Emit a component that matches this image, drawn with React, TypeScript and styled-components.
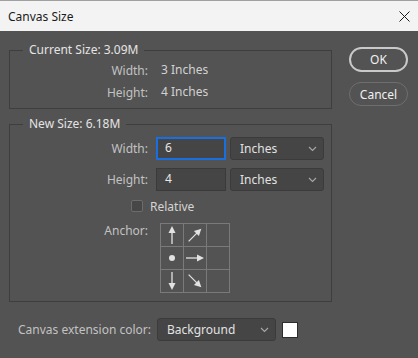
import styled, { createGlobalStyle } from 'styled-components';

const GlobalStyle = createGlobalStyle`
  html, body {
    margin: 0;
    padding: 0;
    background: #535353;
  }
  body {
    font-family: 'Segoe UI', 'Noto Sans', sans-serif;
    font-size: 12px;
  }
`;

const Window = styled.div`
  width: 418px;
  height: 358px;
  background: #535353;
  display: flex;
  flex-direction: column;
  overflow: hidden;
`;

const TitleBar = styled.div`
  height: 31px;
  box-sizing: border-box;
  background: #f3f3f3;
  border-top: 1px solid #a0a0a0;
  display: flex;
  align-items: center;
  justify-content: space-between;
  padding: 0 8px 0 8px;
  color: #1b1b1b;
  font-size: 12px;
`;

const Body = styled.div`
  display: flex;
  padding: 11px 10px 0 9px;
`;

const LeftColumn = styled.div`
  width: 323px;
  display: flex;
  flex-direction: column;
`;

const Group = styled.fieldset<{ $gap?: number; $bottom: number }>`
  margin: 0 0 ${(p) => p.$gap ?? 0}px 0;
  padding: 0 0 ${(p) => p.$bottom}px 0;
  border: 1px solid #3e3e3e;
  min-width: 0;
`;

const Legend = styled.legend`
  margin-left: 13px;
  padding: 0 6px;
  line-height: 16px;
  color: #e4e4e4;
  font-size: 12px;
`;

const Grid = styled.div<{ $top: number }>`
  display: grid;
  grid-template-columns: 138px auto;
  column-gap: 8px;
  align-items: center;
  padding-top: ${(p) => p.$top}px;
`;

const Label = styled.div`
  text-align: right;
  color: #c2c2c2;
`;

const Value = styled.div`
  color: #d2d2d2;
  padding-left: 5px;
  height: 22px;
  line-height: 22px;
`;

const FieldRow = styled.div`
  display: flex;
  gap: 4px;
  height: 23px;
  margin-bottom: 8px;
`;

const FieldLabel = styled(Label)`
  margin-bottom: 8px;
`;

const Input = styled.div<{ $focused?: boolean }>`
  width: 70px;
  height: 23px;
  box-sizing: border-box;
  background: #454545;
  border: 1px solid ${(p) => (p.$focused ? '#1a6fe0' : '#3a3a3a')};
  ${(p) => p.$focused && 'box-shadow: inset 0 0 0 1px #1a6fe0;'}
  color: #e6e6e6;
  padding: 0 0 0 8px;
  line-height: 19px;
`;

const Select = styled.div<{ $w: number }>`
  width: ${(p) => p.$w}px;
  height: 23px;
  box-sizing: border-box;
  background: #454545;
  border: 1px solid #3b3b3b;
  border-radius: 3px;
  display: flex;
  align-items: center;
  justify-content: space-between;
  padding: 0 6px 0 9px;
  color: #e2e2e2;
`;

const CheckRow = styled.label`
  display: flex;
  align-items: center;
  gap: 7px;
  margin: 1px 0 0 -25px;
  height: 12px;
  color: #d4d4d4;
`;

const Box = styled.span`
  width: 12px;
  height: 12px;
  box-sizing: border-box;
  border: 1px solid #6c6c6c;
  border-radius: 2px;
  background: #474747;
`;

const AnchorGrid = styled.div`
  display: grid;
  grid-template-columns: repeat(3, 23px);
  grid-template-rows: repeat(3, 23px);
  width: 70px;
  box-sizing: border-box;
  border-top: 1px solid #7a7a7a;
  border-left: 1px solid #7a7a7a;
  margin: 11px 0 0 4px;
`;

const Cell = styled.div`
  border-right: 1px solid #7a7a7a;
  border-bottom: 1px solid #7a7a7a;
  display: flex;
  align-items: center;
  justify-content: center;
`;

const AnchorLabel = styled(Label)`
  align-self: start;
  margin-top: 11px;
  line-height: 16px;
`;

const BottomRow = styled.div`
  display: flex;
  align-items: center;
  margin-top: 16px;
  padding-left: 9px;
  gap: 6px;
`;

const Swatch = styled.span`
  width: 16px;
  height: 16px;
  box-sizing: border-box;
  border: 1px solid #2c2c2c;
  background: #ffffff;
`;

const RightColumn = styled.div`
  display: flex;
  flex-direction: column;
  gap: 10px;
  margin-left: 17px;
  padding-top: 5px;
`;

const Button = styled.div<{ $primary?: boolean }>`
  width: 59px;
  height: ${(p) => (p.$primary ? 25 : 24)}px;
  box-sizing: border-box;
  border: ${(p) => (p.$primary ? '2px solid #c9c9c9' : '1px solid #6e6e6e')};
  border-radius: 13px;
  display: flex;
  align-items: center;
  justify-content: center;
  color: #f0f0f0;
  font-size: 12px;
`;

const Chevron = () => (
  <svg width="9" height="6" viewBox="0 0 9 6">
    <path d="M1 1 L4.5 4.5 L8 1" stroke="#a8a8a8" strokeWidth="1.1" fill="none" />
  </svg>
);

const CloseIcon = () => (
  <svg width="11" height="11" viewBox="0 0 11 11">
    <path d="M0.5 0.5 L10.5 10.5 M10.5 0.5 L0.5 10.5" stroke="#1b1b1b" strokeWidth="1" />
  </svg>
);

type Dir = 'n' | 'ne' | 'e' | 's' | 'se' | 'dot' | '';

const Arrow = ({ dir }: { dir: Dir }) => {
  const c = '#e2e2e2';
  if (dir === 'dot') {
    return (
      <svg width="22" height="22" viewBox="0 0 22 22">
        <circle cx="11" cy="11" r="3" fill={c} />
      </svg>
    );
  }
  if (!dir) return null;
  const rot = { n: -90, ne: -45, e: 0, s: 90, se: 45 }[dir];
  return (
    <svg width="22" height="22" viewBox="0 0 22 22">
      <g transform={`rotate(${rot} 11 11)`}>
        <path d="M2 11 L14 11" stroke={c} strokeWidth="1.3" />
        <path d="M20 11 L13 7.5 L13 14.5 Z" fill={c} />
      </g>
    </svg>
  );
};

const ANCHOR: Dir[] = ['n', 'ne', '', 'dot', 'e', '', 's', 'se', ''];

export default function App() {
  return (
    <Window>
      <GlobalStyle />
      <TitleBar>
        <span>Canvas Size</span>
        <CloseIcon />
      </TitleBar>
      <Body>
        <LeftColumn>
          <Group $gap={7} $bottom={5}>
            <Legend>Current Size: 3.09M</Legend>
            <Grid $top={1}>
              <Label>Width:</Label>
              <Value>3 Inches</Value>
              <Label>Height:</Label>
              <Value>4 Inches</Value>
            </Grid>
          </Group>
          <Group $bottom={8}>
            <Legend>New Size: 6.18M</Legend>
            <Grid $top={5}>
              <FieldLabel>Width:</FieldLabel>
              <FieldRow>
                <Input $focused>6</Input>
                <Select $w={94}>
                  Inches
                  <Chevron />
                </Select>
              </FieldRow>
              <FieldLabel>Height:</FieldLabel>
              <FieldRow>
                <Input>4</Input>
                <Select $w={94}>
                  Inches
                  <Chevron />
                </Select>
              </FieldRow>
              <span />
              <CheckRow>
                <Box />
                Relative
              </CheckRow>
              <AnchorLabel>Anchor:</AnchorLabel>
              <AnchorGrid>
                {ANCHOR.map((d, i) => (
                  <Cell key={i}>
                    <Arrow dir={d} />
                  </Cell>
                ))}
              </AnchorGrid>
            </Grid>
          </Group>
          <BottomRow>
            <Label>Canvas extension color:</Label>
            <Select $w={119}>
              Background
              <Chevron />
            </Select>
            <Swatch />
          </BottomRow>
        </LeftColumn>
        <RightColumn>
          <Button $primary>OK</Button>
          <Button>Cancel</Button>
        </RightColumn>
      </Body>
    </Window>
  );
}
